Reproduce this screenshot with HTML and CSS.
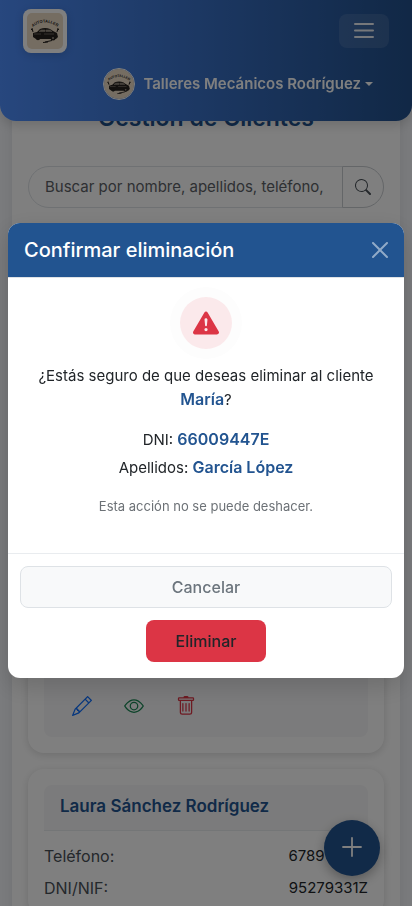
FILE: index.html
```html
<!DOCTYPE html>
<html lang="es">
<head>
<meta charset="utf-8">
<meta name="viewport" content="width=device-width, initial-scale=1">
<title>Gestión de Clientes</title>
<link rel="stylesheet" href="styles.css">
</head>
<body>
<header class="navbar">
  <div class="navbar-top">
    <a class="brand" href="#" aria-label="Inicio">
      <svg class="brand-logo" viewBox="0 0 36 36">
        <g id="logo">
          <rect width="36" height="36" fill="#eadac4"/>
          <path id="arch" d="M5 14.500Q18 4.500 31 14.500" fill="none"/>
          <text class="logo-text"><textPath href="#arch" startOffset="50%" text-anchor="middle">AUTOTALLER</textPath></text>
          <path d="M4 16l2 2M5 15l1 4M31 15l-1 4M32 16l-2 2" stroke="#26221e" stroke-width="1"/>
          <path d="M6 20l4-1 3-3q5-2 10 0l3 2 4 2 1 4-2 2H9l-3-2z" fill="#26221e"/>
          <path d="M12 18.500l2-1.500h4v1.500zM19 17h4l2 1.500h-6zM7 21h7M17 21h10" fill="#9b9184" stroke="#9b9184" stroke-width=".6"/>
          <circle cx="11" cy="25" r="2.200" fill="#26221e"/><circle cx="26" cy="25" r="2.500" fill="#26221e"/>
          <circle cx="26" cy="25" r="1" fill="#9b9184"/>
          <path d="M18 29l7-1.500M16 29.500l5-.5" stroke="#26221e" stroke-width="1"/>
        </g>
      </svg>
    </a>
    <button class="toggler" type="button" aria-label="Menú">
      <svg width="30" height="30" viewBox="0 0 30 30" fill="none" stroke="#fff" stroke-opacity=".9" stroke-width="2" stroke-linecap="round"><path d="M6 8h18M6 14.500h18M6 21h18"/></svg>
    </button>
  </div>
  <button class="user" type="button">
    <svg class="avatar" viewBox="0 0 36 36"><use href="#logo"/></svg>
    <span>Talleres Mecánicos Rodríguez</span>
    <i class="caret"></i>
  </button>
</header>

<main class="page">
  <h1>Gestión de Clientes</h1>
  <form class="search">
    <input type="text" aria-label="Buscar cliente" placeholder="Buscar por nombre, apellidos, teléfono,">
    <button type="button" aria-label="Buscar">
      <svg width="16" height="16" viewBox="0 0 16 16" fill="currentColor"><path d="M11.742 10.344a6.500 6.500 0 1 0-1.397 1.398h-.001q.044.060.098.115l3.850 3.850a1 1 0 0 0 1.415-1.414l-3.850-3.850a1 1 0 0 0-.115-.1zM12 6.500a5.500 5.500 0 1 1-11 0 5.500 5.500 0 0 1 11 0"/></svg>
    </button>
  </form>

  <article class="card card-tall">
    <div class="actions">
      <button class="edit" type="button" aria-label="Editar"><svg width="20" height="20" viewBox="0 0 16 16" fill="currentColor"><path d="M12.146.146a.5.5 0 0 1 .708 0l3 3a.5.5 0 0 1 0 .708l-10 10a.5.5 0 0 1-.168.110l-5 2a.5.5 0 0 1-.650-.650l2-5a.5.5 0 0 1 .110-.168zM11.207 2.500 13.500 4.793 14.793 3.500 12.500 1.207zm1.586 3L10.500 3.207 4 9.707V10h.5a.5.5 0 0 1 .5.5v.5h.5a.5.5 0 0 1 .5.5v.5h.293zm-9.761 5.175-.106.106-1.528 3.821 3.821-1.528.106-.106A.5.5 0 0 1 5 12.500V12h-.5a.5.5 0 0 1-.5-.5V11h-.5a.5.5 0 0 1-.468-.325"/></svg></button>
      <button class="view" type="button" aria-label="Ver"><svg width="20" height="20" viewBox="0 0 16 16" fill="currentColor"><path d="M16 8s-3-5.500-8-5.500S0 8 0 8s3 5.500 8 5.500S16 8 16 8M1.173 8a13 13 0 0 1 1.660-2.043C4.120 4.668 5.880 3.500 8 3.500s3.879 1.168 5.168 2.457A13 13 0 0 1 14.828 8q-.086.130-.195.288c-.335.480-.830 1.120-1.465 1.755C11.879 11.332 10.119 12.500 8 12.500s-3.879-1.168-5.168-2.457A13 13 0 0 1 1.172 8z"/><path d="M8 5.500a2.500 2.500 0 1 0 0 5 2.500 2.500 0 0 0 0-5M4.500 8a3.500 3.500 0 1 1 7 0 3.500 3.500 0 0 1-7 0"/></svg></button>
      <button class="delete" type="button" aria-label="Borrar"><svg width="20" height="20" viewBox="0 0 16 16" fill="currentColor"><path d="M5.500 5.500A.5.5 0 0 1 6 6v6a.5.5 0 0 1-1 0V6a.5.5 0 0 1 .5-.5m2.500 0a.5.5 0 0 1 .5.5v6a.5.5 0 0 1-1 0V6a.5.5 0 0 1 .5-.5m3 .5a.5.5 0 0 0-1 0v6a.5.5 0 0 0 1 0z"/><path d="M14.500 3a1 1 0 0 1-1 1H13v9a2 2 0 0 1-2 2H5a2 2 0 0 1-2-2V4h-.5a1 1 0 0 1-1-1V2a1 1 0 0 1 1-1H6a1 1 0 0 1 1-1h2a1 1 0 0 1 1 1h3.500a1 1 0 0 1 1 1zM4.118 4 4 4.059V13a1 1 0 0 0 1 1h6a1 1 0 0 0 1-1V4.059L11.882 4zM2.500 3h11V2h-11z"/></svg></button>
    </div>
  </article>

  <article class="card">
    <h2>Laura Sánchez Rodríguez</h2>
    <dl>
      <div><dt>Teléfono:</dt><dd>678912345</dd></div>
      <div><dt>DNI/NIF:</dt><dd>95279331Z</dd></div>
    </dl>
  </article>
</main>

<button class="fab" type="button" aria-label="Añadir cliente">
  <svg width="36" height="36" viewBox="0 0 16 16" fill="currentColor"><path d="M8 3.500a.4.4 0 0 1 .4.400v3.700H12a.4.4 0 0 1 0 .8H8.400V12a.4.4 0 0 1-.8 0V8.400H4a.4.4 0 0 1 0-.8h3.600V3.900a.4.4 0 0 1 .4-.4"/></svg>
</button>

<div class="backdrop">
  <section class="modal" role="dialog" aria-modal="true" aria-labelledby="modal-title">
    <header class="modal-header">
      <h2 id="modal-title">Confirmar eliminación</h2>
      <button class="close" type="button" aria-label="Cerrar"><svg width="16" height="16" viewBox="0 0 16 16" fill="#fff"><path d="M.293.293a1 1 0 0 1 1.414 0L8 6.586 14.293.293a1 1 0 1 1 1.414 1.414L9.414 8l6.293 6.293a1 1 0 0 1-1.414 1.414L8 9.414l-6.293 6.293a1 1 0 0 1-1.414-1.414L6.586 8 .293 1.707a1 1 0 0 1 0-1.414"/></svg></button>
    </header>
    <div class="modal-body">
      <div class="warning"><svg width="26" height="26" viewBox="0 0 16 16" fill="#dc3545"><path d="M8.982 1.566a1.130 1.130 0 0 0-1.960 0L.165 13.233c-.457.778.091 1.767.980 1.767h13.713c.889 0 1.438-.990.980-1.767zM8 5c.535 0 .954.462.900.995l-.350 3.507a.552.552 0 0 1-1.100 0L7.100 5.995A.905.905 0 0 1 8 5m.002 6a1 1 0 1 1 0 2 1 1 0 0 1 0-2"/></svg></div>
      <p class="question">¿Estás seguro de que deseas eliminar al cliente <strong>María</strong>?</p>
      <p>DNI: <strong>66009447E</strong></p>
      <p class="surname">Apellidos: <strong>García López</strong></p>
      <p class="note">Esta acción no se puede deshacer.</p>
    </div>
    <footer class="modal-footer">
      <button class="btn cancel" type="button">Cancelar</button>
      <button class="btn confirm" type="button">Eliminar</button>
    </footer>
  </section>
</div>
</body>
</html>
```
FILE: styles.css
```css
* { box-sizing: border-box; }
body {
  margin: 0;
  height: 100vh;
  overflow: hidden;
  background: #f4f6fa;
  color: #212529;
  font: 400 15px/24px Inter, "Liberation Sans", sans-serif;
}
button, input { font: inherit; }
button { cursor: pointer; }
h1, h2, p, dl, dd { margin: 0; }
.logo-text { font: 700 4px "Liberation Sans", sans-serif; fill: #26221e; }

.navbar {
  position: fixed;
  inset: 0 0 auto;
  z-index: 10;
  display: flex;
  flex-direction: column;
  gap: 15px;
  padding: 9px 23px 21px;
  border-radius: 0 0 16px 16px;
  background: linear-gradient(90deg, #4e8efc, #22508c);
  box-shadow: 0 4px 12px rgba(0, 0, 0, .15);
}
.navbar-top { display: flex; align-items: center; justify-content: space-between; }
.brand { display: flex; padding: 4px; border-radius: 8px; background: #fff; box-shadow: 0 2px 8px rgba(0, 0, 0, .15); }
.brand-logo { width: 36px; height: 36px; border-radius: 5px; }
.toggler {
  display: flex;
  align-items: center;
  justify-content: center;
  width: 50px;
  height: 34px;
  padding: 0;
  border: 0;
  border-radius: 8px;
  background: rgba(255, 255, 255, .1);
}
.user {
  display: flex;
  align-items: center;
  align-self: flex-end;
  gap: 8px;
  margin-right: 16px;
  padding: 0;
  border: 0;
  background: none;
  color: #fff;
  font-weight: 600;
  white-space: nowrap;
}
.avatar { width: 32px; height: 32px; border: 1px solid #fff; border-radius: 50%; }
.caret { margin-left: -4px; border: 4px solid transparent; border-top-color: #fff; border-bottom: 0; }

.page { margin: 0 12px; padding: 101px 16px 16px; background: #fff; box-shadow: 0 0 12px rgba(0, 0, 0, .08); }
h1 { color: #225490; font-size: 23px; font-weight: 600; line-height: 35px; text-align: center; }
.search { display: flex; height: 42px; margin: 30px 0 24px; }
.search input {
  flex: 1;
  min-width: 0;
  padding: 0 8px 0 16px;
  border: 1px solid #dee2e6;
  border-radius: 21px 0 0 21px;
  background: #fff;
}
.search input::placeholder { color: #5c6166; opacity: 1; }
.search button {
  display: flex;
  align-items: center;
  justify-content: center;
  width: 42px;
  margin-left: -1px;
  border: 1px solid #c8ccd0;
  border-radius: 0 21px 21px 0;
  background: #fff;
  color: #495057;
}
.card {
  display: flex;
  flex-direction: column;
  margin-bottom: 16px;
  padding: 16px;
  border-radius: 16px;
  background: #fff;
  box-shadow: 0 2px 8px rgba(0, 0, 0, .14);
}
.card-tall { min-height: 521px; }
.card h2 {
  padding: 9px 16px 12px;
  border-bottom: 1px solid #e9ecef;
  border-radius: 8px 8px 0 0;
  background: #f7f7f8;
  color: #225490;
  font-size: 17px;
  font-weight: 600;
}
.card dl { display: flex; flex-direction: column; gap: 8px; padding-top: 13px; }
.card dl div { display: flex; justify-content: space-between; }
.card dt { color: #495057; font-size: 16px; }
.actions { display: flex; gap: 16px; margin-top: auto; padding: 12px 20px 13px; border-radius: 0 0 8px 8px; background: #f7f7f8; }
.actions button { display: flex; padding: 8px; border: 0; background: none; }
.edit { color: #0d6efd; }
.view { color: #198754; }
.delete { color: #dc3545; }
.fab {
  position: fixed;
  right: 32px;
  bottom: 30px;
  display: flex;
  align-items: center;
  justify-content: center;
  width: 56px;
  height: 56px;
  border: 0;
  padding: 0 0 2px;
  border-radius: 50%;
  background: #225490;
  color: #fff;
  box-shadow: 0 4px 12px rgba(0, 0, 0, .3);
}

.backdrop {
  position: fixed;
  inset: 0;
  z-index: 20;
  display: flex;
  align-items: center;
  padding: 0 8px 5px;
  background: rgba(0, 0, 0, .5);
}
.modal { flex: 1; overflow: hidden; border-radius: 12px; background: #fff; box-shadow: 0 8px 24px rgba(0, 0, 0, .15); }
.modal-header {
  display: flex;
  align-items: center;
  justify-content: space-between;
  padding: 12px 16px;
  border-bottom: 1px solid #dee2e6;
  background: #225490;
  background-clip: padding-box;
  color: #fff;
}
.modal-header h2 { font-size: 20px; font-weight: 500; line-height: 30px; }
.close { display: flex; padding: 0; border: 0; background: none; opacity: .5; }
.modal-body { padding: 19px 16px 36px; color: #212529; text-align: center; }
.modal-body strong { color: #225490; font-size: 16px; font-weight: 600; line-height: 16px; }
.warning {
  display: flex;
  align-items: center;
  justify-content: center;
  width: 52px;
  height: 52px;
  margin: 0 auto 15px;
  border-radius: 50%;
  background: #fbe9eb;
  box-shadow: 0 0 0 10px #fdfdfd;
}
.question { margin-bottom: 16px; }
.surname { margin: 4px 0 16px; }
.note { color: #6c7176; font-size: 13px; line-height: 21px; }
.modal-footer {
  display: flex;
  flex-direction: column;
  align-items: center;
  gap: 12px;
  padding: 12px 12px 16px;
  border-top: 1px solid #e9ecef;
}
.btn { height: 42px; padding: 0 28px; border: 1px solid transparent; border-radius: 8px; font-size: 16px; font-weight: 500; }
.cancel { width: 100%; border-color: #dee2e6; background: #f8f9fa; color: #6c757d; }
.confirm { width: 120px; background: #dc3545; color: #212529; }
```
